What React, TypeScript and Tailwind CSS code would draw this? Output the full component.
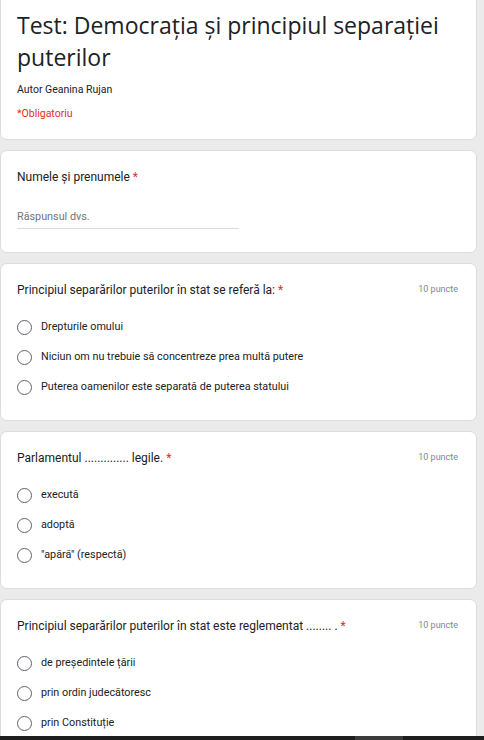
import React from "react";

function Radio() {
  return (
    <span className="inline-block w-[15px] h-[15px] rounded-full border-[1.5px] border-[#5f6368] shrink-0" />
  );
}

function Card({ children, className = "" }: { children: React.ReactNode; className?: string }) {
  return (
    <div className={"bg-white rounded-[7px] border border-[#dadce0] w-[477px] shrink-0 " + className}>
      {children}
    </div>
  );
}

function Question({ title, options }: { title: string; options: string[] }) {
  return (
    <Card className="pt-[17px] pb-[18px] pl-[16px] pr-[18px]">
      <div className="flex items-center justify-between h-[18px]">
        <div className="text-[12px] leading-[18px] text-[#202124]">
          {title} <span className="text-[#d93025]">*</span>
        </div>
        <div className="text-[9px] text-[#80868b]">10 puncte</div>
      </div>
      <div className="mt-[13px] flex flex-col">
        {options.map((o) => (
          <div key={o} className="h-[30px] flex items-center gap-[9px]">
            <Radio />
            <span className="text-[10.8px] text-[#202124]">{o}</span>
          </div>
        ))}
      </div>
    </Card>
  );
}

export default function App() {
  return (
    <div className="h-[740px] w-[484px] overflow-hidden flex flex-col bg-[#ebebeb] font-['Roboto',sans-serif]">
      <div className="flex-1 overflow-hidden flex flex-col gap-[10px]">
        <Card className="-mt-[8px] pt-[16px] pb-[17px] pl-[16px]">
          <div className="text-[23px] leading-[32px] text-[#202124] font-['Open_Sans',sans-serif]">
            Test: Democrația și principiul separației puterilor
          </div>
          <div className="mt-[9px] text-[10.5px] leading-[16px] text-[#202124]">Autor Geanina Rujan</div>
          <div className="mt-[8px] text-[10.5px] leading-[16px] text-[#d93025]">*Obligatoriu</div>
        </Card>
        <Card className="pt-[17px] pb-[23px] pl-[16px]">
          <div className="text-[12px] leading-[18px] text-[#202124]">
            Numele și prenumele <span className="text-[#d93025]">*</span>
          </div>
          <div className="mt-[23px] w-[222px] border-b border-[#dadce0] pb-[3px] text-[10.8px] leading-[16px] text-[#70757a]">
            Răspunsul dvs.
          </div>
        </Card>
        <Question
          title="Principiul separărilor puterilor în stat se referă la:"
          options={[
            "Drepturile omului",
            "Niciun om nu trebuie să concentreze prea multă putere",
            "Puterea oamenilor este separată de puterea statului",
          ]}
        />
        <Question
          title="Parlamentul .............. legile."
          options={["execută", "adoptă", "\"apără\" (respectă)"]}
        />
        <Question
          title="Principiul separărilor puterilor în stat este reglementat ........ ."
          options={["de președintele țării", "prin ordin judecătoresc", "prin Constituție"]}
        />
      </div>
      <div className="h-[4px] bg-[#1e1e1e] flex shrink-0">
        <div className="ml-[355px] w-[48px] bg-[#3b3b3b]" />
      </div>
    </div>
  );
}
